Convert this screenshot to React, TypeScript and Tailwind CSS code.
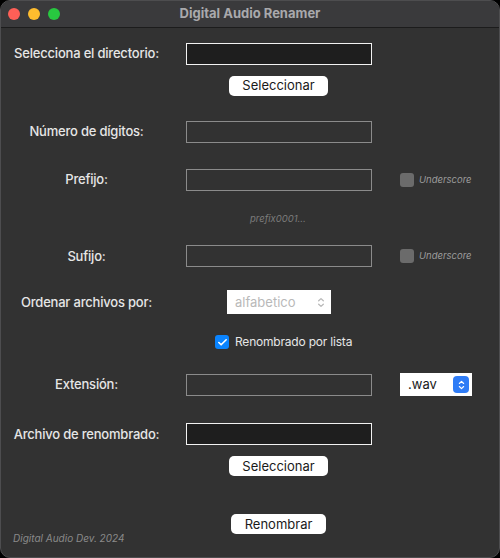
import { Check } from 'lucide-react';

function Chevrons({ className }: { className?: string }) {
  return (
    <svg viewBox="0 0 10 14" className={className} fill="none" stroke="currentColor" strokeWidth="1.4" strokeLinecap="round" strokeLinejoin="round">
      <path d="M2.5 5.2 L5 2.8 L7.5 5.2" />
      <path d="M2.5 8.8 L5 11.2 L7.5 8.8" />
    </svg>
  );
}

function Label({ text }: { text: string }) {
  return (
    <div className="w-[171px] shrink-0 text-center text-[13px] font-medium tracking-[-0.2px] text-[#e6e6e6]">{text}</div>
  );
}

function Field({ active }: { active?: boolean }) {
  return (
    <div
      className={`ml-[14px] h-[22px] w-[186px] shrink-0 border ${
        active ? 'border-[#f2f2f2] bg-[#1e1e1e]' : 'border-[#8b8b8b] bg-[#323232]'
      }`}
    />
  );
}

function Underscore() {
  return (
    <div className="ml-[28px] flex items-center gap-[5px]">
      <div className="h-[14px] w-[14px] rounded-[3px] bg-[#6b6b6b]" />
      <span className="text-[9.5px] italic text-[#9c9c9c]">Underscore</span>
    </div>
  );
}

function MacButton({ text, w }: { text: string; w: string }) {
  return (
    <div className={`flex h-[20px] ${w} items-center justify-center rounded-[5px] bg-white text-[13px] text-[#1a1a1a]`}>
      {text}
    </div>
  );
}

export default function App() {
  return (
    <div className="h-[558px] w-[500px] bg-black font-['Inter',sans-serif]">
      <div className="flex h-full w-full flex-col overflow-hidden rounded-[10px] border border-[#4d4d4f] bg-[#323232]">
        <div className="relative flex h-[27px] shrink-0 items-center justify-center border-b border-[#1c1c1c] bg-[#3a3a3c]">
          <div className="absolute left-[7px] top-[7px] flex gap-[8px]">
            <div className="h-[12px] w-[12px] rounded-full bg-[#fe5f57]" />
            <div className="h-[12px] w-[12px] rounded-full bg-[#febc2e]" />
            <div className="h-[12px] w-[12px] rounded-full bg-[#28c840]" />
          </div>
          <span className="text-[13px] font-bold text-[#a9a9ac]">Digital Audio Renamer</span>
        </div>

        <div className="flex flex-col pt-[15px]">
          <div className="flex h-[22px] items-center">
            <Label text="Selecciona el directorio:" />
            <Field active />
          </div>
          <div className="mt-[11px] flex pl-[228px]">
            <MacButton text="Seleccionar" w="w-[99px]" />
          </div>

          <div className="mt-[25px] flex h-[22px] items-center">
            <Label text="Número de dígitos:" />
            <Field />
          </div>

          <div className="mt-[26px] flex h-[22px] items-center">
            <Label text="Prefijo:" />
            <Field />
            <Underscore />
          </div>

          <div className="mt-[21px] pl-[249px] text-[9.5px] italic text-[#7c7c7c]">prefix0001...</div>

          <div className="mt-[19px] flex h-[22px] items-center">
            <Label text="Sufijo:" />
            <Field />
            <Underscore />
          </div>

          <div className="mt-[23px] flex h-[24px] items-center">
            <Label text="Ordenar archivos por:" />
            <div className="ml-[55px] flex h-[24px] w-[104px] items-center justify-between bg-white pl-[8px] pr-[5px]">
              <span className="text-[13px] text-[#b9b9b9]">alfabetico</span>
              <Chevrons className="h-[13px] w-[10px] text-[#b9b9b9]" />
            </div>
          </div>

          <div className="mt-[21px] flex h-[14px] items-center pl-[214px]">
            <div className="flex h-[14px] w-[14px] items-center justify-center rounded-[3px] bg-[#0a84ff]">
              <Check className="h-[11px] w-[11px] text-white" strokeWidth={3.5} />
            </div>
            <span className="ml-[6px] text-[12px] tracking-[-0.2px] text-[#e6e6e6]">Renombrado por lista</span>
          </div>

          <div className="mt-[24px] flex h-[23px] items-center">
            <Label text="Extensión:" />
            <Field />
            <div className="ml-[28px] flex h-[23px] w-[72px] items-center justify-between bg-white pl-[8px] pr-[3px]">
              <span className="text-[13px] text-[#1a1a1a]">.wav</span>
              <div className="flex h-[17px] w-[16px] items-center justify-center rounded-[4px] bg-[#2f7cf6]">
                <Chevrons className="h-[12px] w-[9px] text-white" />
              </div>
            </div>
          </div>

          <div className="mt-[27px] flex h-[22px] items-center">
            <Label text="Archivo de renombrado:" />
            <Field active />
          </div>
          <div className="mt-[11px] flex pl-[228px]">
            <MacButton text="Seleccionar" w="w-[99px]" />
          </div>

          <div className="mt-[38px] flex h-[32px]">
            <div className="flex w-[230px] items-end pl-[12px]">
              <span className="text-[10px] italic text-[#8a8a8a]">Digital Audio Dev. 2024</span>
            </div>
            <MacButton text="Renombrar" w="w-[95px]" />
          </div>
        </div>
      </div>
    </div>
  );
}
